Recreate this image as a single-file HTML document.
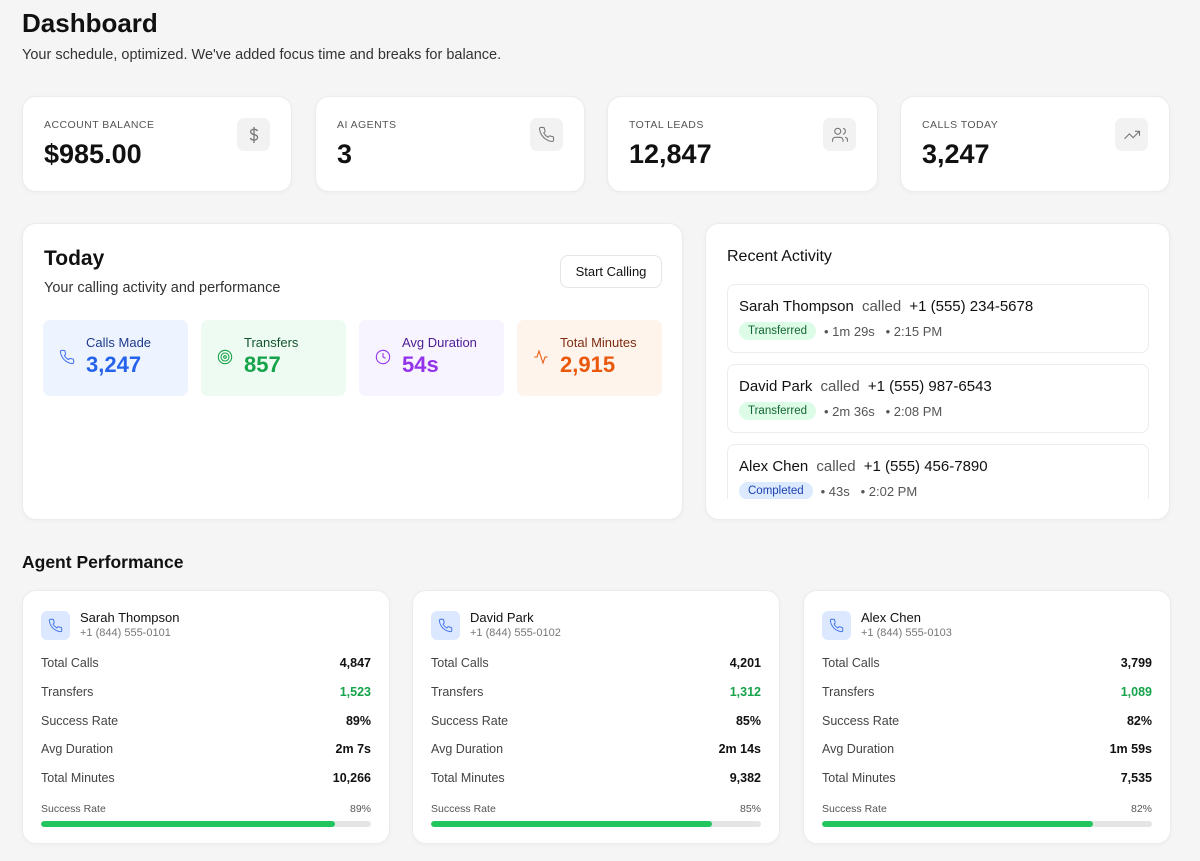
<!DOCTYPE html>
<html><head><meta charset="utf-8"><style>
*{box-sizing:border-box;margin:0;padding:0}
body{width:1200px;height:861px;background:#f5f5f5;font-family:"Liberation Sans",Arial,sans-serif;color:#111;position:relative;overflow:hidden}
.abs{position:absolute}
.card{position:absolute;background:#fff;border-radius:14px;border:1px solid #ececec;box-shadow:0 1px 4px rgba(0,0,0,.04)}
.lbl{position:absolute;left:21px;top:22px;font-size:10.5px;letter-spacing:.45px;color:#555}
.val{position:absolute;left:21px;top:42px;font-size:27px;font-weight:bold;color:#111}
.ico{position:absolute;right:21px;top:21px;width:33px;height:33px;border-radius:7px;background:#f2f2f2;display:flex;align-items:center;justify-content:center}
.tile{position:absolute;top:96px;width:145px;height:76px;border-radius:7px}
.tile svg{position:absolute;left:16px;top:29px}
.tile .t{position:absolute;left:43px;top:15px;font-size:13px}
.tile .n{position:absolute;left:43px;top:32px;font-size:22px;font-weight:bold}
.item{position:absolute;left:21px;width:422px;height:69px;border:1px solid #ececec;border-radius:8px}
.item .h{position:absolute;left:11px;top:13px;font-size:15px;color:#111}
.item .h span{color:#555;margin:0 4px}
.item .b{position:absolute;left:11px;top:37px;font-size:13px;color:#555;display:flex;align-items:center}
.badge{font-size:11.5px;padding:3px 9px;border-radius:10px;margin-right:8px}
.ag .top svg{position:absolute;left:18px;top:20px}
.ag .nm{position:absolute;left:57px;top:19px;font-size:13px}
.ag .ph{position:absolute;left:57px;top:36px;font-size:11px;color:#777}
.row{position:absolute;left:18px;right:18px;font-size:12.5px;color:#444;display:flex;justify-content:space-between}
.row b{color:#111}
.sr{position:absolute;left:18px;right:18px;top:212px;font-size:10.5px;color:#555;display:flex;justify-content:space-between}
.bar{position:absolute;left:18px;right:18px;top:230px;height:6px;border-radius:3px;background:#e5e5e5;overflow:hidden}
.bar div{height:100%;background:#22c55e;border-radius:3px}
</style></head><body>
<div class="abs" style="left:22px;top:8px;font-size:26px;font-weight:bold">Dashboard</div>
<div class="abs" style="left:22px;top:47px;font-size:14.5px;color:#333">Your schedule, optimized. We've added focus time and breaks for balance.</div>

<div class="card" style="left:22px;top:96px;width:270px;height:96px"><div class="lbl">ACCOUNT BALANCE</div><div class="val">$985.00</div><div class="ico"><svg width="16" height="18" viewBox="0 0 16 18" fill="none" stroke="#777" stroke-width="1.3"><path d="M8 1v16M11.5 5C11 3.8 9.8 3.3 8 3.3 6 3.3 4.6 4.3 4.6 5.8c0 3.6 7 1.8 7 5.6 0 1.6-1.5 2.6-3.6 2.6-2 0-3.2-.7-3.6-2"/></svg></div></div>
<div class="card" style="left:315px;top:96px;width:270px;height:96px"><div class="lbl">AI AGENTS</div><div class="val">3</div><div class="ico"><svg width="17" height="17" viewBox="0 0 24 24" fill="none" stroke="#777" stroke-width="1.5"><path d="M22 16.9v3a2 2 0 0 1-2.2 2 19.8 19.8 0 0 1-8.6-3.1 19.5 19.5 0 0 1-6-6A19.8 19.8 0 0 1 2.1 4.2 2 2 0 0 1 4.1 2h3a2 2 0 0 1 2 1.7c.1 1 .4 1.9.7 2.8a2 2 0 0 1-.5 2.1L8.1 9.900a16 16 0 0 0 6 6l1.3-1.3a2 2 0 0 1 2.1-.4c.9.3 1.8.6 2.8.7a2 2 0 0 1 1.7 2z"/></svg></div></div>
<div class="card" style="left:607px;top:96px;width:271px;height:96px"><div class="lbl">TOTAL LEADS</div><div class="val">12,847</div><div class="ico"><svg width="18" height="18" viewBox="0 0 24 24" fill="none" stroke="#777" stroke-width="1.5"><path d="M16 21v-2a4 4 0 0 0-4-4H6a4 4 0 0 0-4 4v2"/><circle cx="9" cy="7" r="4"/><path d="M22 21v-2a4 4 0 0 0-3-3.9M16 3.1a4 4 0 0 1 0 7.8"/></svg></div></div>
<div class="card" style="left:900px;top:96px;width:270px;height:96px"><div class="lbl">CALLS TODAY</div><div class="val">3,247</div><div class="ico"><svg width="18" height="18" viewBox="0 0 24 24" fill="none" stroke="#777" stroke-width="1.5"><path d="M22 7l-8.5 8.5-5-5L2 17M16 7h6v6"/></svg></div></div>

<div class="card" style="left:22px;top:223px;width:661px;height:297px">
<div class="abs" style="left:21px;top:23px;font-size:21px;font-weight:bold">Today</div>
<div class="abs" style="left:21px;top:56px;font-size:14.5px;color:#333">Your calling activity and performance</div>
<div class="abs" style="left:537px;top:31px;width:102px;height:33px;border:1px solid #e5e5e5;border-radius:8px;font-size:13px;display:flex;align-items:center;justify-content:center">Start Calling</div>
<div class="tile" style="left:20px;background:#eef4ff"><svg width="16" height="16" viewBox="0 0 24 24" fill="none" stroke="#3b6fe8" stroke-width="1.5"><path d="M22 16.9v3a2 2 0 0 1-2.2 2 19.8 19.8 0 0 1-8.6-3.1 19.5 19.5 0 0 1-6-6A19.8 19.8 0 0 1 2.1 4.2 2 2 0 0 1 4.1 2h3a2 2 0 0 1 2 1.7c.1 1 .4 1.9.7 2.8a2 2 0 0 1-.5 2.1L8.1 9.9a16 16 0 0 0 6 6l1.3-1.3a2 2 0 0 1 2.1-.4c.9.3 1.8.6 2.8.7a2 2 0 0 1 1.7 2z"/></svg><div class="t" style="color:#1e3a8a">Calls Made</div><div class="n" style="color:#2563eb">3,247</div></div>
<div class="tile" style="left:178px;background:#eefbf2"><svg width="16" height="16" viewBox="0 0 24 24" fill="none" stroke="#16a34a" stroke-width="1.6"><circle cx="12" cy="12" r="10"/><circle cx="12" cy="12" r="6"/><circle cx="12" cy="12" r="2"/></svg><div class="t" style="color:#14532d">Transfers</div><div class="n" style="color:#16a34a">857</div></div>
<div class="tile" style="left:336px;background:#f7f3ff"><svg width="16" height="16" viewBox="0 0 24 24" fill="none" stroke="#9333ea" stroke-width="1.6"><circle cx="12" cy="12" r="10"/><path d="M12 6v6l4 2"/></svg><div class="t" style="color:#4c1d95">Avg Duration</div><div class="n" style="color:#9333ea">54s</div></div>
<div class="tile" style="left:494px;background:#fff4ec"><svg width="16" height="16" viewBox="0 0 24 24" fill="none" stroke="#ea580c" stroke-width="1.6"><path d="M22 12h-4l-3 9L9 3l-3 9H2"/></svg><div class="t" style="color:#7c2d12">Total Minutes</div><div class="n" style="color:#ea580c">2,915</div></div>
</div>

<div class="card" style="left:705px;top:223px;width:465px;height:297px;overflow:hidden">
<div class="abs" style="left:21px;top:24px;font-size:16px">Recent Activity</div>
<div class="abs" style="left:0;top:0;width:465px;height:275px;overflow:hidden">
<div class="item" style="top:60px"><div class="h">Sarah Thompson <span>called</span> +1 (555) 234-5678</div><div class="b"><span class="badge" style="background:#dcfce7;color:#166534">Transferred</span>• 1m 29s &nbsp; • 2:15 PM</div></div>
<div class="item" style="top:140px"><div class="h">David Park <span>called</span> +1 (555) 987-6543</div><div class="b"><span class="badge" style="background:#dcfce7;color:#166534">Transferred</span>• 2m 36s &nbsp; • 2:08 PM</div></div>
<div class="item" style="top:220px"><div class="h">Alex Chen <span>called</span> +1 (555) 456-7890</div><div class="b"><span class="badge" style="background:#dbeafe;color:#1e40af">Completed</span>• 43s &nbsp; • 2:02 PM</div></div>
</div></div>

<div class="abs" style="left:22px;top:552px;font-size:17.5px;font-weight:bold">Agent Performance</div>

<div class="card ag" style="left:22px;top:590px;width:368px;height:254px"><div class="top"><div class="abs" style="left:18px;top:20px;width:29px;height:29px;border-radius:6px;background:#dbe8ff"></div><svg style="left:25px;top:27px" width="15" height="15" viewBox="0 0 24 24" fill="none" stroke="#3b6fe8" stroke-width="1.5"><path d="M22 16.9v3a2 2 0 0 1-2.2 2 19.8 19.8 0 0 1-8.6-3.1 19.5 19.5 0 0 1-6-6A19.8 19.8 0 0 1 2.1 4.2 2 2 0 0 1 4.1 2h3a2 2 0 0 1 2 1.7c.1 1 .4 1.9.7 2.8a2 2 0 0 1-.5 2.1L8.1 9.9a16 16 0 0 0 6 6l1.3-1.3a2 2 0 0 1 2.1-.4c.9.3 1.8.6 2.8.7a2 2 0 0 1 1.7 2z"/></svg></div><div class="nm">Sarah Thompson</div><div class="ph">+1 (844) 555-0101</div>
<div class="row" style="top:65px"><span>Total Calls</span><b>4,847</b></div><div class="row" style="top:94px"><span>Transfers</span><b style="color:#16a34a">1,523</b></div><div class="row" style="top:123px"><span>Success Rate</span><b>89%</b></div><div class="row" style="top:151px"><span>Avg Duration</span><b>2m 7s</b></div><div class="row" style="top:180px"><span>Total Minutes</span><b>10,266</b></div>
<div class="sr"><span>Success Rate</span><span>89%</span></div><div class="bar"><div style="width:89%"></div></div></div>

<div class="card ag" style="left:412px;top:590px;width:368px;height:254px"><div class="top"><div class="abs" style="left:18px;top:20px;width:29px;height:29px;border-radius:6px;background:#dbe8ff"></div><svg style="left:25px;top:27px" width="15" height="15" viewBox="0 0 24 24" fill="none" stroke="#3b6fe8" stroke-width="1.5"><path d="M22 16.9v3a2 2 0 0 1-2.2 2 19.8 19.8 0 0 1-8.6-3.1 19.5 19.5 0 0 1-6-6A19.8 19.8 0 0 1 2.1 4.2 2 2 0 0 1 4.1 2h3a2 2 0 0 1 2 1.7c.1 1 .4 1.9.7 2.8a2 2 0 0 1-.5 2.1L8.1 9.9a16 16 0 0 0 6 6l1.3-1.3a2 2 0 0 1 2.1-.4c.9.3 1.8.6 2.8.7a2 2 0 0 1 1.7 2z"/></svg></div><div class="nm">David Park</div><div class="ph">+1 (844) 555-0102</div>
<div class="row" style="top:65px"><span>Total Calls</span><b>4,201</b></div><div class="row" style="top:94px"><span>Transfers</span><b style="color:#16a34a">1,312</b></div><div class="row" style="top:123px"><span>Success Rate</span><b>85%</b></div><div class="row" style="top:151px"><span>Avg Duration</span><b>2m 14s</b></div><div class="row" style="top:180px"><span>Total Minutes</span><b>9,382</b></div>
<div class="sr"><span>Success Rate</span><span>85%</span></div><div class="bar"><div style="width:85%"></div></div></div>

<div class="card ag" style="left:803px;top:590px;width:368px;height:254px"><div class="top"><div class="abs" style="left:18px;top:20px;width:29px;height:29px;border-radius:6px;background:#dbe8ff"></div><svg style="left:25px;top:27px" width="15" height="15" viewBox="0 0 24 24" fill="none" stroke="#3b6fe8" stroke-width="1.5"><path d="M22 16.9v3a2 2 0 0 1-2.2 2 19.8 19.8 0 0 1-8.6-3.1 19.5 19.5 0 0 1-6-6A19.8 19.8 0 0 1 2.1 4.2 2 2 0 0 1 4.1 2h3a2 2 0 0 1 2 1.7c.1 1 .4 1.9.7 2.8a2 2 0 0 1-.5 2.1L8.1 9.9a16 16 0 0 0 6 6l1.3-1.3a2 2 0 0 1 2.1-.4c.9.3 1.8.6 2.8.7a2 2 0 0 1 1.7 2z"/></svg></div><div class="nm">Alex Chen</div><div class="ph">+1 (844) 555-0103</div>
<div class="row" style="top:65px"><span>Total Calls</span><b>3,799</b></div><div class="row" style="top:94px"><span>Transfers</span><b style="color:#16a34a">1,089</b></div><div class="row" style="top:123px"><span>Success Rate</span><b>82%</b></div><div class="row" style="top:151px"><span>Avg Duration</span><b>1m 59s</b></div><div class="row" style="top:180px"><span>Total Minutes</span><b>7,535</b></div>
<div class="sr"><span>Success Rate</span><span>82%</span></div><div class="bar"><div style="width:82%"></div></div></div>
</body></html>
